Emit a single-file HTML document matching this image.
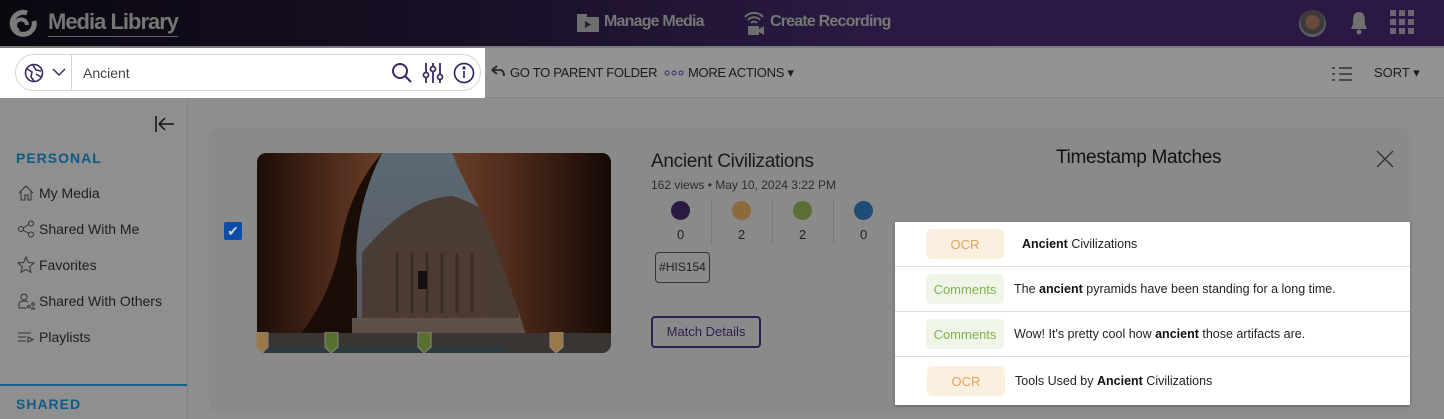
<!DOCTYPE html>
<html><head><meta charset="utf-8"><style>
*{box-sizing:border-box;margin:0;padding:0}
body{width:1444px;height:419px;overflow:hidden;background:#8f8f8f;font-family:"Liberation Sans",sans-serif;position:relative}
.abs{position:absolute}
#hdr{left:0;top:0;width:1444px;height:46px;background:linear-gradient(90deg,#0b0810 0%,#1a1028 35%,#2a1a43 60%,#2b1945 100%)}
#tb{left:0;top:46px;width:1444px;height:52px;background:#939393;border-top:2px solid #7a7a7a;border-bottom:1px solid #858585}
#side{left:0;top:98px;width:188px;height:321px;background:#8f8f8f;border-right:1px solid #828282}
.nav{position:absolute;left:17px;font-size:14px;color:#1e1e1e;display:flex;align-items:center;gap:4px}
.nav svg{width:18px;height:18px}
.card{left:209px;top:128px;width:1202px;height:284px;background:#8a8a8a;border-radius:10px}
.row{position:absolute;left:0;width:515px;height:45px;border-bottom:1px solid #dedede;display:flex;align-items:center;font-size:12.5px;color:#222}
.tag{width:78px;height:30px;border-radius:5px;display:flex;align-items:center;justify-content:center;font-size:13px;margin-left:31px;margin-right:14px}
.ocr{background:#fbefe0;color:#dca65c}
.com{background:#eff5e8;color:#82b24c}
b{font-weight:bold;color:#111}
</style></head><body>
<div id="hdr" class="abs">
 <svg class="abs" style="left:7px;top:9px" width="32" height="28" viewBox="0 0 32 28"><path d="M20 4 A11 11 0 1 0 27 12" fill="none" stroke="#7b7b7b" stroke-width="5"/><path d="M12 22 A6 6 0 1 1 20 16" fill="none" stroke="#7b7b7b" stroke-width="4"/></svg>
 <div class="abs" style="left:48px;top:9px;font-size:22px;font-weight:bold;color:#767676;letter-spacing:-1px;border-bottom:1px solid #666;padding-bottom:1px">Media Library</div>
 <svg class="abs" style="left:576px;top:12px" width="24" height="20"><rect x="1" y="2" width="10" height="4" fill="#6e6e6e"/><rect x="1" y="5" width="22" height="15" rx="1" fill="#6e6e6e"/><path d="M9 9 L15 12.5 L9 16Z" fill="#2a1d3c"/></svg>
 <div class="abs" style="left:604px;top:13px;font-size:16px;font-weight:bold;color:#767676;letter-spacing:-0.8px">Manage Media</div>
 <svg class="abs" style="left:742px;top:9px" width="24" height="26"><path d="M3 8 A12 12 0 0 1 21 8 M6 11 A8 8 0 0 1 18 11 M9 14 A4 4 0 0 1 15 14" stroke="#6e6e6e" stroke-width="2" fill="none"/><rect x="6" y="17" width="11" height="9" fill="#6e6e6e"/><path d="M17 20 L22 17 V26 L17 23Z" fill="#6e6e6e"/></svg>
 <div class="abs" style="left:770px;top:13px;font-size:16px;font-weight:bold;color:#767676;letter-spacing:-0.8px">Create Recording</div>
 <div class="abs" style="left:1299px;top:10px;width:27px;height:27px;border-radius:50%;background:radial-gradient(circle at 50% 45%,#6a4a3c 0 35%,#3e3a3a 36% 60%,#58606a 61%)"></div>
 <svg class="abs" style="left:1348px;top:10px" width="22" height="26"><path d="M11 2 C5 2 5 8 5 14 L3 19 H19 L17 14 C17 8 17 2 11 2Z" fill="#707070"/><circle cx="11" cy="22" r="2.5" fill="#707070"/></svg>
 <svg class="abs" style="left:1390px;top:10px" width="24" height="24" fill="#6c6470"><rect x="0" y="0" width="6" height="6"/><rect x="9" y="0" width="6" height="6"/><rect x="18" y="0" width="6" height="6"/><rect x="0" y="9" width="6" height="6"/><rect x="9" y="9" width="6" height="6"/><rect x="18" y="9" width="6" height="6"/><rect x="0" y="18" width="6" height="6"/><rect x="9" y="18" width="6" height="6"/><rect x="18" y="18" width="6" height="6"/></svg>
</div>
<div id="tb" class="abs">
 <div class="abs" style="left:0;top:0;width:485px;height:50px;background:#fff"></div>
 <div class="abs" style="left:15px;top:6px;width:466px;height:37px;border:1px solid #d8d3e0;border-radius:19px;background:#fff"></div>
 <div class="abs" style="left:71px;top:7px;width:1px;height:35px;background:#d8d3e0"></div>
 <svg class="abs" style="left:24px;top:15px" width="20" height="20" viewBox="0 0 20 20" fill="none" stroke="#3b2a63" stroke-width="1.6"><circle cx="10" cy="10" r="8.5"/><path d="M3 6 L8 9 L7 14 L10 18 M9 2 L12 7 L17 8 M12 11 L17 14"/></svg>
 <svg class="abs" style="left:52px;top:20px" width="14" height="9"><path d="M1 1 L7 7 L13 1" stroke="#3b2a63" stroke-width="1.5" fill="none"/></svg>
 <div class="abs" style="left:83px;top:17px;font-size:14px;color:#444">Ancient</div>
 <svg class="abs" style="left:391px;top:14px" width="22" height="22" fill="none" stroke="#3b2a63" stroke-width="2"><circle cx="9" cy="9" r="7"/><path d="M14 14 L20 20"/></svg>
 <svg class="abs" style="left:422px;top:14px" width="22" height="22" fill="none" stroke="#3b2a63" stroke-width="1.8"><path d="M4 1V21 M11 1V21 M18 1V21"/><circle cx="4" cy="13" r="2.5" fill="#fff"/><circle cx="11" cy="7" r="2.5" fill="#fff"/><circle cx="18" cy="15" r="2.5" fill="#fff"/></svg>
 <svg class="abs" style="left:453px;top:14px" width="22" height="22" fill="none" stroke="#3b2a63" stroke-width="1.7"><circle cx="11" cy="11" r="9.5"/><path d="M11 9V16"/><circle cx="11" cy="6" r="0.8" fill="#3b2a63"/></svg>
 <svg class="abs" style="left:491px;top:17px" width="14" height="12"><path d="M1 5 L6 1 M1 5 L6 9 M1 5 H9 Q13 5 13 11" stroke="#2a2a2a" stroke-width="1.8" fill="none"/></svg>
 <div class="abs" style="left:510px;top:17px;font-size:13px;color:#1c1c1c;letter-spacing:-0.3px">GO TO PARENT FOLDER</div>
 <svg class="abs" style="left:664px;top:22px" width="20" height="6" fill="none" stroke="#3b2a63" stroke-width="1"><circle cx="3" cy="3" r="2"/><circle cx="10" cy="3" r="2"/><circle cx="17" cy="3" r="2"/></svg>
 <div class="abs" style="left:688px;top:17px;font-size:13px;color:#1c1c1c;letter-spacing:-0.3px">MORE ACTIONS ▾</div>
 <svg class="abs" style="left:1332px;top:18px" width="20" height="16" stroke="#333" stroke-width="1.5"><path d="M0 2H3 M7 2H20 M0 8H3 M7 8H20 M0 14H3 M7 14H20"/></svg>
 <div class="abs" style="left:1374px;top:17px;font-size:13px;color:#1c1c1c">SORT ▾</div>
</div>
<div id="side" class="abs">
 <svg class="abs" style="left:155px;top:18px" width="20" height="16" stroke="#111" stroke-width="1.5" fill="none"><path d="M1 0V16 M4 8H19 M4 8 L10 2 M4 8 L10 14"/></svg>
 <div class="abs" style="left:16px;top:52px;font-size:14px;font-weight:bold;color:#0f5b88;letter-spacing:1px">PERSONAL</div>
 <div class="nav" style="top:86px"><svg viewBox="0 0 18 18" fill="none" stroke="#333" stroke-width="1"><path d="M2 9 L9 2 L16 9 M4 7V16H8V11H11V16H14V7"/></svg>My Media</div>
 <div class="nav" style="top:122px"><svg viewBox="0 0 18 18" fill="none" stroke="#333" stroke-width="1"><circle cx="4" cy="9" r="2.5"/><circle cx="14" cy="3.5" r="2.5"/><circle cx="14" cy="14.5" r="2.5"/><path d="M6 8 L12 4.5 M6 10 L12 13.5"/></svg>Shared With Me</div>
 <div class="nav" style="top:158px"><svg viewBox="0 0 18 18" fill="none" stroke="#333" stroke-width="1"><path d="M9 1 L11.3 6.5 L17 7 L12.6 10.8 L14 16.5 L9 13.5 L4 16.5 L5.4 10.8 L1 7 L6.7 6.5Z"/></svg>Favorites</div>
 <div class="nav" style="top:194px"><svg viewBox="0 0 18 18" fill="none" stroke="#333" stroke-width="1"><circle cx="7" cy="5" r="3"/><path d="M2 16 V12 Q2 9 7 9 Q10 9 11 10 M2 16H10"/><circle cx="16" cy="12" r="1.3"/><circle cx="12" cy="14.5" r="1.3"/><circle cx="16" cy="17" r="1.3"/></svg>Shared With Others</div>
 <div class="nav" style="top:230px"><svg viewBox="0 0 18 18" fill="none" stroke="#333" stroke-width="1"><path d="M1 5H14 M1 9H9 M1 13H9 M11 9 L16 11.5 L11 14Z"/></svg>Playlists</div>
 <div class="abs" style="left:0;top:286px;width:187px;height:2px;background:#1a5f8c"></div>
 <div class="abs" style="left:16px;top:298px;font-size:14px;font-weight:bold;color:#0f5b88;letter-spacing:1px">SHARED</div>
</div>
<div class="abs" style="left:193px;top:103px;width:1251px;height:316px;background:#8e8e8e"></div>
<div class="abs card"></div>
<div class="abs" style="left:224px;top:222px;width:18px;height:18px;background:#0b4da8;border-radius:2px;color:#ccc;font-size:14px;text-align:center;line-height:18px">✔</div>
<svg class="abs" style="left:257px;top:153px;border-radius:9px" width="354" height="200" viewBox="0 0 354 200">
 <defs><linearGradient id="sky" x1="0" y1="0" x2="0" y2="1"><stop offset="0" stop-color="#5a6a72"/><stop offset="1" stop-color="#5c5560"/></linearGradient>
 <linearGradient id="rl" x1="0" y1="0" x2="1" y2="0"><stop offset="0" stop-color="#1c0d07"/><stop offset="0.6" stop-color="#4e2b1b"/><stop offset="1" stop-color="#6a3e28"/></linearGradient>
 <linearGradient id="rr" x1="0" y1="0" x2="1" y2="0"><stop offset="0" stop-color="#6a3e28"/><stop offset="0.4" stop-color="#4c2a1a"/><stop offset="1" stop-color="#150905"/></linearGradient>
 <clipPath id="c"><rect width="354" height="200" rx="9"/></clipPath></defs>
 <g clip-path="url(#c)">
 <rect width="354" height="200" fill="#1a0d08"/>
 <path d="M125 0 Q95 60 100 120 V185 H270 Q250 100 240 60 Q215 20 200 0Z" fill="url(#sky)"/>
 <path d="M105 100 Q150 45 195 43 Q240 55 262 100 V185 H105Z" fill="#4a3c35"/>
 <path d="M130 95 H230 V165 H130Z" fill="#4c3c33"/>
 <path d="M140 100V160 M155 100V160 M170 100V160 M185 100V160 M200 100V160 M215 100V160" stroke="#3a2d27" stroke-width="3"/>
 <rect x="161" y="118" width="9" height="18" fill="#151010"/>
 <path d="M95 165 H285 V185 H95Z" fill="#5e5046"/>
 <path d="M0 0 H125 Q90 40 82 100 Q70 150 40 185 H0Z" fill="url(#rl)"/>
 <path d="M195 0 H354 V185 H270 Q250 120 225 60 Q205 25 195 0Z" fill="url(#rr)"/>
 <rect x="0" y="180" width="354" height="20" fill="#3a3532"/>
 <rect x="0" y="193" width="250" height="7" fill="#2c3c3e"/>
 </g>
</svg>
<svg class="abs" style="left:254px;top:332px" width="320" height="22"><path d="M2 0H14V15L8 21L2 15Z" fill="#9a7848" stroke="#888" /><path d="M71 0H84V15L77 21L71 15Z" fill="#58702f" stroke="#888"/><path d="M164 0H177V15L170 21L164 15Z" fill="#58702f" stroke="#888"/><path d="M296 0H309V15L302 21L296 15Z" fill="#9a7848" stroke="#888"/></svg>
<div class="abs" style="left:651px;top:151px;font-size:19px;color:#1a1a1a;letter-spacing:-0.3px">Ancient Civilizations</div>
<div class="abs" style="left:651px;top:178px;font-size:12px;color:#2e2e2e">162 views • May 10, 2024 3:22 PM</div>
<div class="abs" style="left:671px;top:201px;width:19px;height:19px;border-radius:50%;background:#2a1a40"></div>
<div class="abs" style="left:732px;top:201px;width:19px;height:19px;border-radius:50%;background:#8c6a3e"></div>
<div class="abs" style="left:793px;top:201px;width:19px;height:19px;border-radius:50%;background:#5b6e35"></div>
<div class="abs" style="left:854px;top:201px;width:19px;height:19px;border-radius:50%;background:#1e4e78"></div>
<div class="abs" style="left:711px;top:200px;width:1px;height:44px;background:#7a7a7a"></div>
<div class="abs" style="left:772px;top:200px;width:1px;height:44px;background:#7a7a7a"></div>
<div class="abs" style="left:833px;top:200px;width:1px;height:44px;background:#7a7a7a"></div>
<div class="abs" style="left:677px;top:227px;font-size:13px;color:#222">0</div>
<div class="abs" style="left:738px;top:227px;font-size:13px;color:#222">2</div>
<div class="abs" style="left:799px;top:227px;font-size:13px;color:#222">2</div>
<div class="abs" style="left:860px;top:227px;font-size:13px;color:#222">0</div>
<div class="abs" style="left:655px;top:252px;width:55px;height:31px;border:1px solid #333;border-radius:4px;font-size:12px;color:#222;text-align:center;line-height:29px">#HIS154</div>
<div class="abs" style="left:651px;top:316px;width:110px;height:32px;border:2px solid #2f1e52;border-radius:4px;font-size:13px;color:#2f1e52;text-align:center;line-height:28px">Match Details</div>
<div class="abs" style="left:1056px;top:147px;font-size:19px;color:#111;letter-spacing:-0.3px">Timestamp Matches</div>
<svg class="abs" style="left:1376px;top:150px" width="18" height="18" stroke="#333" stroke-width="1.3"><path d="M1 1L17 17M17 1L1 17"/></svg>
<div class="abs" style="left:895px;top:222px;width:515px;height:183px;background:#fff;box-shadow:0 1px 3px rgba(0,0,0,.3)">
 <div class="row" style="top:0"><span class="tag ocr">OCR</span><span style="margin-left:4px"><b>Ancient</b> Civilizations</span></div>
 <div class="row" style="top:45px"><span class="tag com">Comments</span><span style="margin-left:-4px">The <b>ancient</b> pyramids have been standing for a long time.</span></div>
 <div class="row" style="top:90px"><span class="tag com">Comments</span><span style="margin-left:-4px">Wow! It's pretty cool how <b>ancient</b> those artifacts are.</span></div>
 <div class="row" style="top:135px;border:none;height:48px"><span class="tag ocr" style="margin-left:32px">OCR</span><span style="margin-left:-4px">Tools Used by <b>Ancient</b> Civilizations</span></div>
</div>
</body></html>
